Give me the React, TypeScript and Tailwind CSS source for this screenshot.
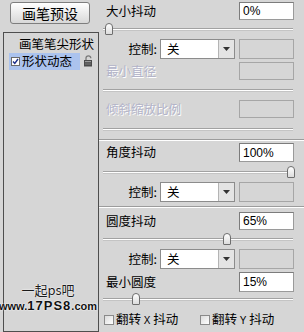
import React from 'react';

type RowProps = { label: string; value: string; className?: string; h?: string };

const InputBox = ({ value, h = 'h-[19px]' }: { value: string; h?: string }) => (
  <div className={`w-[55px] ${h} bg-white border border-[#9a9a9a] border-t-[#7c7c7c] border-l-[#7c7c7c] pl-[3px] flex items-center text-[12px] font-['Liberation_Sans',sans-serif] text-black`}>
    {value}
  </div>
);

const DisabledBox = ({ h = 'h-[18px]' }: { h?: string }) => (
  <div className={`w-[55px] ${h} border border-[#a6a6a6]`} />
);

const ValueRow = ({ label, value, className = '', h }: RowProps) => (
  <div className={`flex items-center justify-between pl-[7px] pr-[10px] ${className}`}>
    <span className="leading-none">{label}</span>
    <InputBox value={value} h={h} />
  </div>
);

const DisabledRow = ({ label, className = '' }: { label: string; className?: string }) => (
  <div className={`flex items-center justify-between pl-[7px] pr-[10px] ${className}`}>
    <span className="leading-none text-[#b3b4c9] [text-shadow:1px_1px_0_#ffffff]">{label}</span>
    <DisabledBox />
  </div>
);

const Track = ({ className = '' }: { className?: string }) => (
  <div className={`ml-[4px] mr-[11px] h-[3px] bg-white border-t border-[#a2a2a2] border-b border-b-[#c4c4c4] ${className}`} />
);

const Slider = ({ thumb, className = '' }: { thumb: string; className?: string }) => (
  <div className={`relative h-[12px] ${className}`}>
    <div className="absolute left-[4px] right-[11px] top-[5px] h-[3px] bg-white border-t border-[#a2a2a2] border-b border-b-[#c4c4c4]" />
    <div className={`absolute top-0 ${thumb} w-[8px] h-[12px] rounded-t-[4px] rounded-b-[1px] border border-[#6e6e6e] bg-gradient-to-b from-white to-[#dcdcdc]`} />
  </div>
);

const ControlRow = ({ className = '' }: { className?: string }) => (
  <div className={`flex items-center justify-end pr-[10px] ${className}`}>
    <span className="leading-none">控制:</span>
    <div className="ml-[3px] w-[75px] h-[20px] bg-white border border-[#8c8c8c] flex items-stretch">
      <span className="flex-1 pl-[6px] flex items-center leading-none">关</span>
      <div className="w-[16px] bg-[#e4e4e4] border-l border-[#b4b4b4] flex items-center justify-center">
        <svg width="7" height="4" viewBox="0 0 7 4">
          <path d="M0 0h7L3.5 4z" fill="#333" />
        </svg>
      </div>
    </div>
    <div className="ml-[4px]">
      <DisabledBox h="h-[20px]" />
    </div>
  </div>
);

const Separator = ({ className = '' }: { className?: string }) => (
  <div className={`h-[2px] border-t border-[#9c9c9c] bg-white ${className}`} />
);

const Check = ({ label }: { label: React.ReactNode }) => (
  <div className="flex items-center">
    <div className="w-[10px] h-[10px] border border-[#8a8a8a] bg-gradient-to-br from-[#dcdcdc] to-white" />
    <span className="ml-[2px] leading-none">{label}</span>
  </div>
);

export default function App() {
  return (
    <div className="relative w-[304px] h-[332px] overflow-hidden bg-[#d6d6d6] flex text-[12.5px] text-black font-['Noto_Sans_CJK_SC',sans-serif]">
      {/* 左侧列表 */}
      <div className="w-[99px] pl-[3px] flex flex-col">
        <button className="ml-[7px] mt-[2px] w-[80px] h-[22px] rounded-[3px] border border-[#7e7e7e] bg-gradient-to-b from-white to-[#d8d8d8] text-[14px] leading-none">
          画笔预设
        </button>
        <div className="mt-[8px] h-[302px] border border-[#4e4e4e] flex flex-col">
          <div className="mt-[3px] h-[16px] pr-[4px] text-right leading-[16px]">画笔笔尖形状</div>
          <div className="mt-[1px] flex items-center">
            <div className="ml-[5px] w-[71px] h-[17px] bg-[#abc3ee] flex items-center">
              <div className="ml-[2px] w-[9px] h-[9px] bg-white border border-[#6a6a6a] flex items-center justify-center">
                <svg width="7" height="7" viewBox="0 0 7 7">
                  <path d="M1 3.5l1.8 2L6 1" stroke="#1c2f8a" strokeWidth="1.4" fill="none" />
                </svg>
              </div>
              <span className="ml-[2px] leading-none">形状动态</span>
            </div>
            <svg className="ml-[3px]" width="10" height="12" viewBox="0 0 10 12">
              <path d="M3 5V3.2a2.4 2.4 0 0 1 4.8 0" stroke="#7a7a7a" strokeWidth="1.3" fill="none" />
              <rect x="1" y="5" width="8" height="6.5" fill="#4a4a4a" />
              <rect x="2" y="6" width="6" height="1.2" fill="#9a9a9a" />
              <rect x="2" y="8.5" width="6" height="1" fill="#7a7a7a" />
            </svg>
          </div>
        </div>
      </div>

      {/* 右侧设置 */}
      <div className="flex-1 flex flex-col">
        <ValueRow label="大小抖动" value="0%" className="mt-[2px]" h="h-[18px]" />
        <Slider thumb="left-[6px]" className="mt-[3px]" />
        <ControlRow className="mt-[4px]" />
        <DisabledRow label="最小直径" className="mt-[3px]" />
        <Track className="mt-[9px]" />
        <DisabledRow label="倾斜缩放比例" className="mt-[8px]" />
        <Track className="mt-[10px]" />
        <Separator className="mt-[8px]" />
        <ValueRow label="角度抖动" value="100%" className="mt-[2px]" />
        <Slider thumb="left-[188px]" className="mt-[4px]" />
        <ControlRow className="mt-[4px]" />
        <Separator className="mt-[4px]" />
        <ValueRow label="圆度抖动" value="65%" className="mt-[4px]" h="h-[18px]" />
        <Slider thumb="left-[124px]" className="mt-[3px]" />
        <ControlRow className="mt-[4px]" />
        <ValueRow label="最小圆度" value="15%" className="mt-[3px]" h="h-[20px]" />
        <Slider thumb="left-[33px]" className="mt-[1px]" />
        <div className="mt-[8px] pl-[5px] flex">
          <div className="w-[96px]">
            <Check label={<>翻转 <span className="font-['Liberation_Sans',sans-serif] text-[10px]">X</span> 抖动</>} />
          </div>
          <Check label={<>翻转 <span className="font-['Liberation_Sans',sans-serif] text-[10px]">Y</span> 抖动</>} />
        </div>
      </div>

      {/* 水印 */}
      <div className="absolute left-0 top-[283px] w-[96px] flex flex-col items-center">
        <div className="text-[13px] leading-none text-[#1a1a1a] [text-shadow:0_0_2px_#ffffff,0_0_1px_#ffffff]">一起ps吧</div>
        <div className="mt-[3px] leading-none font-['Liberation_Sans',sans-serif] font-bold text-[#111] [text-shadow:0_0_2px_#ffffff,0_0_1px_#ffffff] whitespace-nowrap">
          <span className="text-[11px]">www.</span>
          <span className="text-[13px] tracking-[1px]">17PS8</span>
          <span className="text-[11px]">.com</span>
        </div>
      </div>
    </div>
  );
}
